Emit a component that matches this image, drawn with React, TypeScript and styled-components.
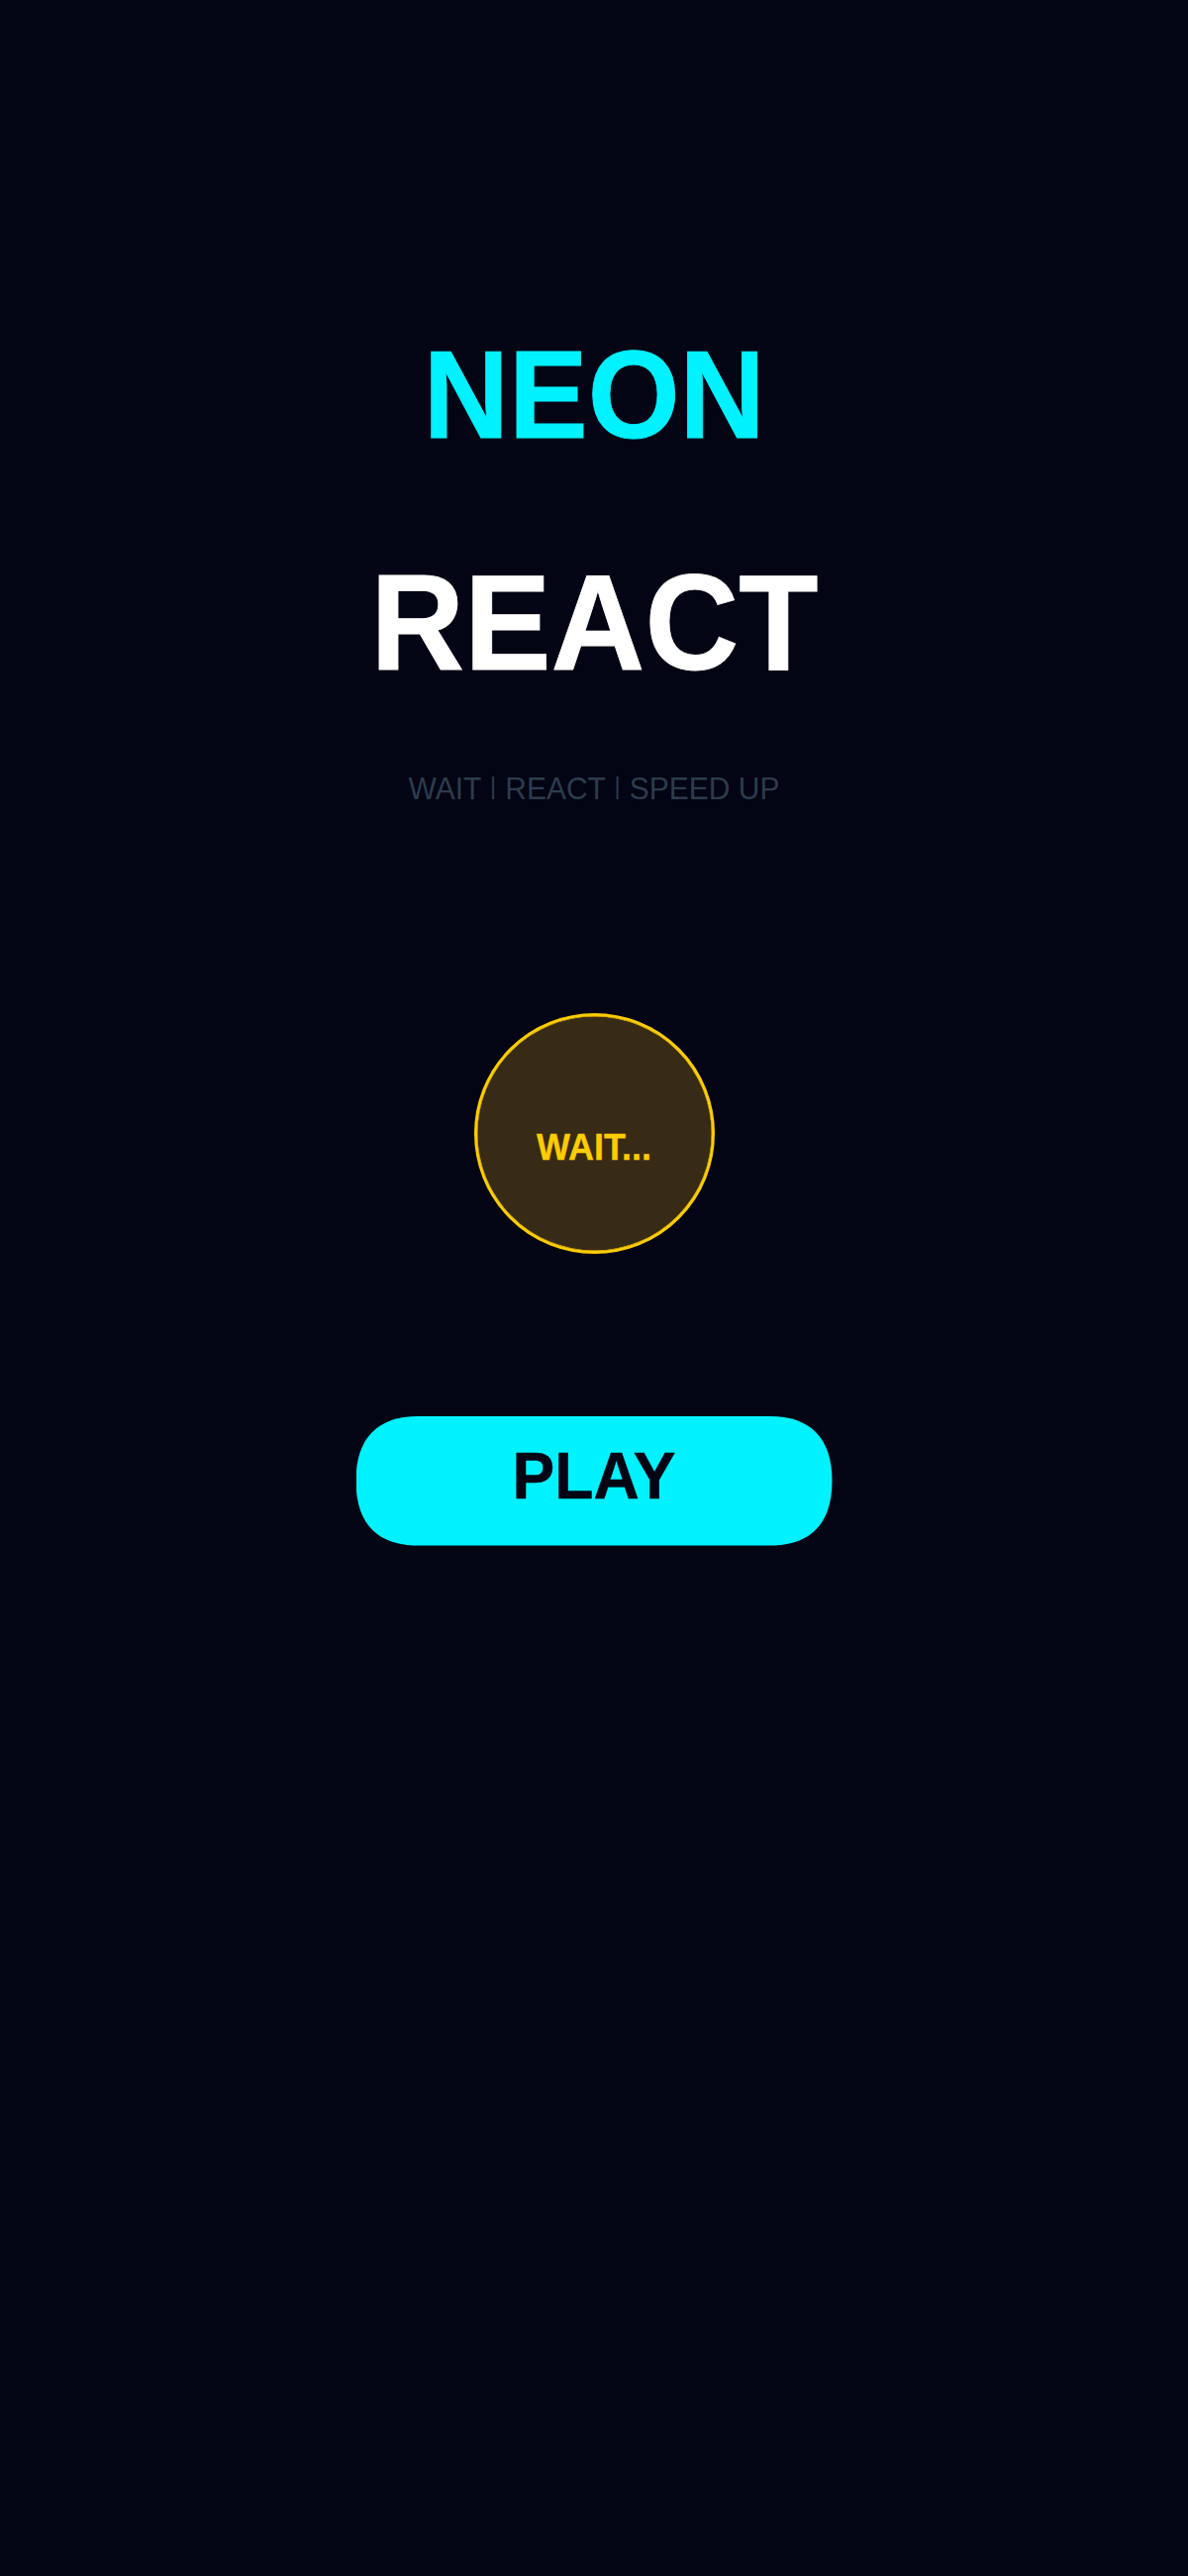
import styled, { createGlobalStyle } from 'styled-components';

const COLORS = {
  background: '#030414',
  cyan: '#00f2ff',
  white: '#ffffff',
  muted: '#2d3c4c',
  yellow: '#ffcc00',
  yellowDim: '#382b16',
};

const App = () => {
  return (
    <>
      <GlobalStyle />
      <Screen>
        <Title $size={120} $height={126} $color={COLORS.cyan}>
          NEON
        </Title>
        <Title as="h2" $size={132} $height={139} $color={COLORS.white}>
          REACT
        </Title>
        <Tagline>
          WAIT <Divider>|</Divider> REACT <Divider>|</Divider> SPEED UP
        </Tagline>
        <Signal>
          <SignalLabel>WAIT...</SignalLabel>
        </Signal>
        <PlayButton type="button">
          <PlayLabel>PLAY</PlayLabel>
        </PlayButton>
      </Screen>
    </>
  );
};

export default App;

const GlobalStyle = createGlobalStyle`
  * {
    box-sizing: border-box;
  }

  body {
    margin: 0;
    background-color: ${COLORS.background};
    font-family: Helvetica, 'Liberation Sans', Arial, sans-serif;
  }
`;

const Screen = styled.main`
  display: flex;
  flex-direction: column;
  align-items: center;
  min-height: 2601px;
  padding-top: 335px;
  background-color: ${COLORS.background};
`;

const Title = styled.h1<{ $size: number; $height: number; $color: string }>`
  margin: 0 0 98px;
  font-size: ${({ $size }) => $size}px;
  font-weight: 700;
  line-height: ${({ $height }) => $height}px;
  color: ${({ $color }) => $color};
  white-space: nowrap;
  transform: scale(0.995, 1.046);
  -webkit-text-stroke: 0.8px ${({ $color }) => $color};

  & + & {
    margin-bottom: 82px;
  }
`;

const Tagline = styled.p`
  margin: 0 0 211px;
  font-size: 30px;
  line-height: 32px;
  color: ${COLORS.muted};
  white-space: pre;
  transform: scaleY(1.05);
`;

const Divider = styled.span`
  padding: 0 0.8px;
  font-size: 23.5px;
  line-height: 0;
  vertical-align: 4.5px;
`;

const Signal = styled.div`
  display: flex;
  align-items: center;
  justify-content: center;
  width: 243px;
  height: 243px;
  margin-bottom: 164px;
  padding-top: 26px;
  border: 3px solid ${COLORS.yellow};
  border-radius: 50%;
  background-color: ${COLORS.yellowDim};
  box-shadow: inset 0 0 0 0.4px ${COLORS.yellow};
`;

const SignalLabel = styled.span`
  font-size: 36px;
  font-weight: 700;
  line-height: 38px;
  color: ${COLORS.yellow};
  transform: scaleY(1.045);
  -webkit-text-stroke: 0.3px ${COLORS.yellow};
`;

const PlayButton = styled.button`
  display: flex;
  align-items: center;
  justify-content: center;
  width: 481px;
  height: 131px;
  padding: 0 0 11px;
  border: none;
  background-color: ${COLORS.cyan};
  color: ${COLORS.background};
  font-family: inherit;
  cursor: pointer;
  /* smooth corners, a bit squarer than border-radius */
  clip-path: path(
    'M0 65.3 C0 22 22 0 63 0 H418 C459 0 481 22 481 65.3 C481 108.6 459 130.6 418 130.6 H63 C22 130.6 0 108.6 0 65.3 Z'
  );
`;

const PlayLabel = styled.span`
  font-size: 64px;
  font-weight: 700;
  line-height: 68px;
  transform: scaleY(1.046);
  -webkit-text-stroke: 0.5px ${COLORS.background};
`;
